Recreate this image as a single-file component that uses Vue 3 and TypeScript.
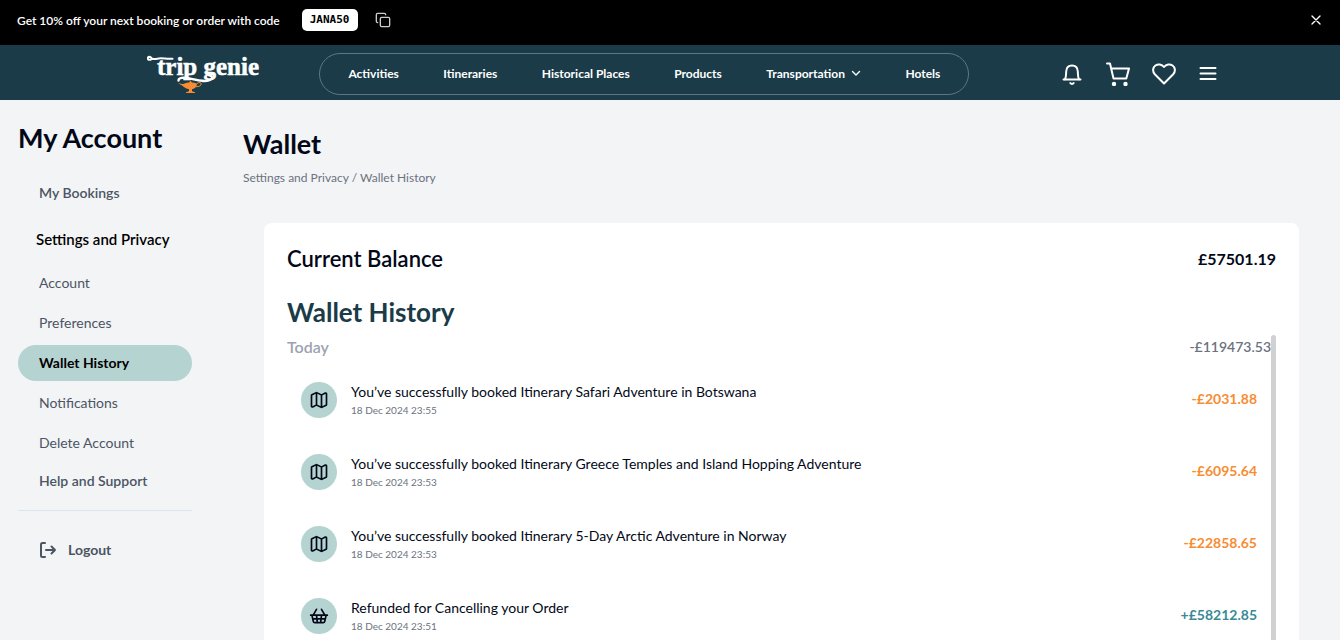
<script setup lang="ts">
import { ref } from 'vue'

interface Entry {
  icon: 'map' | 'basket'
  title: string
  date: string
  amount: string
  credit: boolean
}

const navLinks: { label: string; menu?: boolean }[] = [
  { label: 'Activities' },
  { label: 'Itineraries' },
  { label: 'Historical Places' },
  { label: 'Products' },
  { label: 'Transportation', menu: true },
  { label: 'Hotels' },
]

const settingsLinks = ['Account', 'Preferences', 'Wallet History', 'Notifications', 'Delete Account']
const active = ref('Wallet History')
const promoOpen = ref(true)

const entries: Entry[] = [
  { icon: 'map', title: 'You’ve successfully booked Itinerary Safari Adventure in Botswana', date: '18 Dec 2024 23:55', amount: '-£2031.88', credit: false },
  { icon: 'map', title: 'You’ve successfully booked Itinerary Greece Temples and Island Hopping Adventure', date: '18 Dec 2024 23:53', amount: '-£6095.64', credit: false },
  { icon: 'map', title: 'You’ve successfully booked Itinerary 5-Day Arctic Adventure in Norway', date: '18 Dec 2024 23:53', amount: '-£22858.65', credit: false },
  { icon: 'basket', title: 'Refunded for Cancelling your Order', date: '18 Dec 2024 23:51', amount: '+£58212.85', credit: true },
]
</script>

<template>
  <div class="page">
    <div v-if="promoOpen" class="promo">
      <span>Get 10% off your next booking or order with code</span>
      <code class="code">JANA50</code>
      <button class="icon-btn copy" type="button" aria-label="Copy code">
        <svg width="16" height="16" viewBox="0 0 24 24" class="line">
          <rect x="8" y="8" width="14" height="14" rx="2" />
          <path d="M4 16c-1.1 0-2-.9-2-2V4c0-1.1.9-2 2-2h10c1.1 0 2 .9 2 2" />
        </svg>
      </button>
      <button class="icon-btn close" type="button" aria-label="Close" @click="promoOpen = false">
        <svg width="16" height="16" viewBox="0 0 24 24" class="line"><path d="M18 6 6 18M6 6l12 12" /></svg>
      </button>
    </div>

    <header class="header">
      <a href="#" class="logo" aria-label="trip genie">
        <svg width="120" height="46" viewBox="0 -5 120 46">
          <text x="10" y="20" class="logo-text">trip genie</text>
          <path d="M4 4.500C1.500 5.500 0 3.800 1 2.500 2 1.300 4.500 2 4.500 3.500c3 1.200 6-.2 9-.2 4 0 7 1 12 .4" fill="none" stroke="#fff" stroke-width="2" stroke-linecap="round" />
          <path d="M31.500 25.500c0-3 5-3.300 11-2 8 1.800 18 4.500 22 .5 1.500-2 0-3.500-3-4" fill="none" stroke="#fff" stroke-width="2.400" stroke-linecap="round" />
          <g fill="#f88c33">
            <path d="M43.500 25.500l2 3.200h-4z" />
            <path d="M31 28.500c3-.5 4 1.200 6 .2 3-1.500 10-1.500 13 0-.3 3.500-2.800 5-5 5.500v2l3 1v.9h-9v-.9l3-1v-2c-5-.8-5.500-3.900-11-5.700z" />
            <path d="M49.500 29.500c.8-2.700 5-2.500 4.700-.5-.2 2-2.500 2.700-5.200 2.700" fill="none" stroke="#f88c33" />
          </g>
        </svg>
      </a>
      <nav class="nav" aria-label="Main">
        <template v-for="link in navLinks" :key="link.label">
          <button v-if="link.menu" type="button" class="nav-link">
            {{ link.label }}
            <svg width="10" height="10" viewBox="0 0 10 10" class="line chevron"><path d="m1.500 3.500 3.500 3.500 3.500-3.500" /></svg>
          </button>
          <a v-else href="#" class="nav-link">{{ link.label }}</a>
        </template>
      </nav>
      <div class="actions">
        <button class="icon-btn" type="button" aria-label="Notifications">
          <svg width="24" height="24" viewBox="0 0 24 24" class="line">
            <path d="M3.500 17.500h17" />
            <path d="M5 17.300c1.200-2 1-4.500 1.200-7.800C6.400 5.500 9 3.500 12 3.500s5.600 2 5.800 6c.2 3.300 0 5.800 1.200 7.800" />
            <path d="M10.300 21c.8 1.200 2.600 1.200 3.400 0" />
          </svg>
        </button>
        <button class="icon-btn" type="button" aria-label="Cart">
          <svg width="24" height="24" viewBox="0 0 24 24" class="line">
            <path d="M1 1.500h3l3.500 15h12.800L23 6.500H5.300" />
            <circle cx="8" cy="22" r="1.200" fill="currentColor" /><circle cx="19.500" cy="22" r="1.200" fill="currentColor" />
          </svg>
        </button>
        <button class="icon-btn" type="button" aria-label="Wishlist">
          <svg width="24" height="24" viewBox="0 0 24 24" class="line">
            <path d="M12 21.500 2.800 12.200C.3 9.500.6 5.500 3.400 3.500 6 1.700 9.800 2 12 5c2.200-3 6-3.300 8.600-1.500 2.800 2 3.100 6 .6 8.700z" />
          </svg>
        </button>
        <button class="icon-btn" type="button" aria-label="Menu">
          <svg width="20" height="20" viewBox="0 0 20 20" class="line"><path d="M2.500 4h15M2.500 9.500h15M2.500 15h15" /></svg>
        </button>
      </div>
    </header>

    <div class="body">
      <aside class="sidebar">
        <h1 class="side-title">My Account</h1>
        <a href="#" class="side-link strong">My Bookings</a>
        <h2 class="side-group">Settings and Privacy</h2>
        <ul class="side-list">
          <li v-for="label in settingsLinks" :key="label">
            <a href="#" class="side-link" :class="{ active: active === label }" @click.prevent="active = label">{{ label }}</a>
          </li>
        </ul>
        <a href="#" class="side-link strong">Help and Support</a>
        <button type="button" class="logout">
          <svg width="18" height="18" viewBox="0 0 18 18" class="line">
            <path d="M6 2H3.500C2.500 2 2 2.500 2 3.500v11c0 1 .5 1.500 1.500 1.500H6M7 9h9M12.500 5.500 16 9l-3.500 3.500" />
          </svg>
          Logout
        </button>
      </aside>

      <main class="content">
        <h1 class="title">Wallet</h1>
        <p class="crumbs">Settings and Privacy / Wallet History</p>
        <section class="card">
          <div class="balance">
            <h2>Current Balance</h2>
            <strong>£57501.19</strong>
          </div>
          <h2 class="history-title">Wallet History</h2>
          <div class="history">
            <div class="history-main">
              <div class="day"><h3>Today</h3><span>-£119473.53</span></div>
              <ul class="entries">
                <li v-for="(e, i) in entries" :key="i" class="entry">
                  <span class="badge">
                    <svg v-if="e.icon === 'map'" width="20" height="20" viewBox="0 0 24 24" class="line">
                      <path d="M14.106 5.553a2 2 0 0 0 1.788 0l3.659-1.830A1 1 0 0 1 21 4.619v12.764a1 1 0 0 1-.553.894l-4.553 2.277a2 2 0 0 1-1.788 0l-4.212-2.106a2 2 0 0 0-1.788 0l-3.659 1.830A1 1 0 0 1 3 19.381V6.618a1 1 0 0 1 .553-.894l4.553-2.277a2 2 0 0 1 1.788 0zM15 5.764v15M9 3.236v15" />
                    </svg>
                    <svg v-else width="20" height="20" viewBox="0 0 24 24" class="line">
                      <path d="m15 11-1 9M19 11l-4-7M2 11h20M3.500 11l1.600 7.400a2 2 0 0 0 2 1.600h9.800a2 2 0 0 0 2-1.600l1.700-7.400M4.500 15.500h15M5 11l4-7M9 11l1 9" />
                    </svg>
                  </span>
                  <div class="entry-text">
                    <p>{{ e.title }}</p>
                    <time>{{ e.date }}</time>
                  </div>
                  <span class="amount" :class="{ credit: e.credit }">{{ e.amount }}</span>
                </li>
              </ul>
            </div>
            <div class="scrollbar" aria-hidden="true"></div>
          </div>
        </section>
      </main>
    </div>
  </div>
</template>

<style>
body {
  background: #f3f4f6;
}
</style>

<style scoped>
.page {
  display: flex;
  flex-direction: column;
  height: 100vh;
  overflow: hidden;
  background: #f3f4f6;
  color: #020817;
  font-family: Lato, 'Liberation Sans', sans-serif;
}
h1, h2, h3, p, ul {
  margin: 0;
  padding: 0;
}
ul {
  list-style: none;
}
a {
  color: inherit;
  text-decoration: none;
}
button {
  border: 0;
  padding: 0;
  background: none;
  color: inherit;
  font: inherit;
  cursor: pointer;
}
.line {
  display: block;
  fill: none;
  stroke: currentColor;
  stroke-width: 2;
  stroke-linecap: round;
  stroke-linejoin: round;
}
.chevron {
  stroke-width: 1.4;
}
.icon-btn {
  display: flex;
}
.promo {
  display: flex;
  flex: none;
  align-items: center;
  padding: 0 16px 5px 17px;
  height: 40px;
  background: #000;
  color: #fff;
  font-size: 12px;
  font-weight: 600;
}
.code {
  margin-left: 22px;
  padding: 0 8px;
  border-radius: 5px;
  background: #fff;
  color: #000;
  font: bold 11px/22px 'DejaVu Sans Mono', monospace;
}
.copy {
  margin-left: 17px;
  color: #ccc;
}
.close {
  margin-left: auto;
}
.header {
  display: flex;
  flex: none;
  align-items: center;
  height: 55px;
  padding: 0 8% 0 11%;
  background: #1a3b47;
  color: #fff;
}
.logo {
  display: flex;
}
.logo-text {
  fill: #fff;
  stroke: #fff;
  stroke-width: 0.5;
  font: bold 25px 'Liberation Serif', serif;
}
.nav {
  display: flex;
  flex: 0 1 592px;
  align-items: center;
  justify-content: space-between;
  height: 40px;
  margin-left: 52px;
  padding: 0 28px;
  border: 1px solid #5f7780;
  border-radius: 21px;
  margin-top: 3px;
  font-size: 12px;
  font-weight: 700;
}
.nav-link {
  display: flex;
  align-items: center;
  gap: 6px;
  padding-bottom: 2px;
}
.actions {
  display: flex;
  align-items: center;
  gap: 22px;
  margin-left: auto;
  padding: 3px 15px 0 0;
}
.body {
  display: flex;
  flex: 1;
}
.sidebar {
  flex: none;
  width: 174px;
  padding: 20px 0 0 18px;
}
.side-title {
  margin-bottom: 19px;
  font-size: 27px;
  line-height: 36px;
}
.side-link {
  display: block;
  padding: 0 21px;
  border-radius: 18px;
  color: #4b5563;
  font-size: 14px;
  line-height: 36px;
}
.strong {
  font-weight: 600;
}
.active {
  background: #b5d3d1;
  color: #000;
  font-weight: 700;
}
.side-group {
  margin: 10px 0 8px;
  padding-left: 18px;
  color: #000;
  font-size: 15px;
  font-weight: 600;
  line-height: 36px;
}
.side-list {
  display: grid;
  gap: 4px;
  margin-bottom: 2px;
}
.logout {
  display: flex;
  align-items: center;
  gap: 11px;
  width: 100%;
  margin-top: 11px;
  padding: 21px;
  border-top: 1px solid #dbe5f0;
  color: #4b5563;
  font-size: 14px;
  font-weight: 700;
  line-height: 36px;
}
.content {
  flex: 1;
  min-width: 0;
  padding: 26px 41px 0 51px;
}
.title {
  font-size: 27px;
  line-height: 36px;
}
.crumbs {
  margin-top: 6px;
  color: #6b7280;
  font-size: 12px;
  line-height: 20px;
}
.card {
  margin: 35px 0 0 21px;
  padding: 22px 23px;
  border-radius: 8px;
  background: #fff;
}
.balance {
  display: flex;
  align-items: center;
  justify-content: space-between;
  line-height: 28px;
}
.balance h2 {
  font-size: 22px;
  font-weight: 600;
}
.balance strong {
  font-size: 16px;
  font-weight: 700;
}
.history-title {
  margin: 21px 0 5px;
  color: #1a3b47;
  font-size: 26px;
  line-height: 36px;
}
.history {
  display: flex;
}
.history-main {
  flex: 1;
  min-width: 0;
}
.scrollbar {
  width: 5px;
  border-radius: 3px;
  background: #d1d1d1;
}
.day {
  display: flex;
  justify-content: space-between;
  color: #6b7280;
  font-size: 14px;
  font-weight: 600;
  line-height: 24px;
}
.day h3 {
  color: #9ca3af;
  font-size: 16px;
  font-weight: 600;
}
.entries {
  padding: 5px 14px 0;
}
.entry {
  display: flex;
  align-items: center;
  height: 72px;
}
.badge {
  display: grid;
  flex: none;
  place-items: center;
  width: 36px;
  height: 36px;
  border-radius: 50%;
  background: #b5d3d1;
}
.entry-text {
  flex: 1;
  margin-left: 14px;
}
.entry-text p {
  font-size: 14px;
  line-height: 20px;
}
.entry-text time {
  display: block;
  color: #6b7280;
  font-size: 10px;
  line-height: 16px;
}
.amount {
  padding-bottom: 3px;
  color: #f88c33;
  font-size: 14px;
  font-weight: 700;
}
.credit {
  color: #388a94;
}
</style>
